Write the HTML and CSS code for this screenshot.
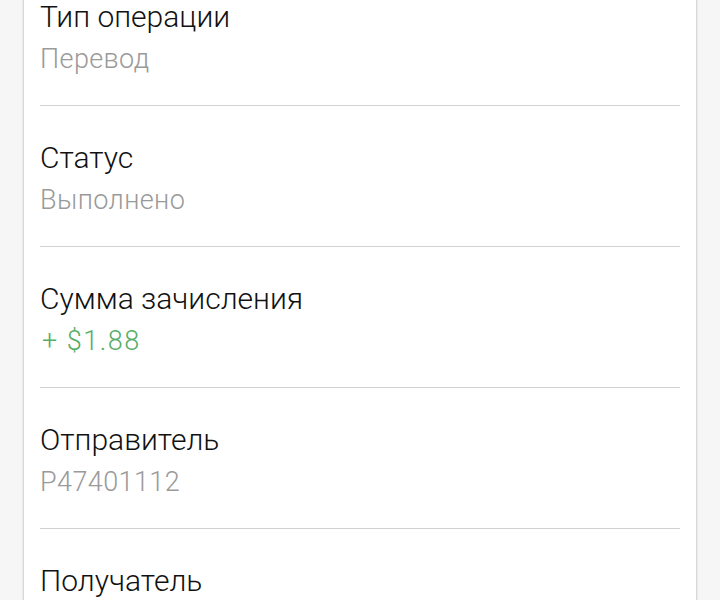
FILE: index.html
```html
<!DOCTYPE html>
<html lang="ru">
<head>
<meta charset="utf-8">
<link rel="stylesheet" href="styles.css">
</head>
<body>
<div class="page">
  <div class="card">
    <div class="row">
      <div class="label">Тип операции</div>
      <div class="value">Перевод</div>
    </div>
    <div class="row">
      <div class="label">Статус</div>
      <div class="value">Выполнено</div>
    </div>
    <div class="row">
      <div class="label">Сумма зачисления</div>
      <div class="value positive">+ $1.88</div>
    </div>
    <div class="row">
      <div class="label">Отправитель</div>
      <div class="value">P47401112</div>
    </div>
    <div class="row">
      <div class="label">Получатель</div>
      <div class="value">P12345678</div>
    </div>
  </div>
</div>
</body>
</html>
```
FILE: styles.css
```css
html, body {
  margin: 0;
  padding: 0;
  background: #f6f6f6;
  overflow: hidden;
  height: 600px;
}
.page {
  padding: 0 24px;
  font-family: Roboto, "Noto Sans", sans-serif;
}
.card {
  background: #ffffff;
  margin-top: -35px;
  padding: 0 16px;
  box-shadow: 0 0 3px rgba(0,0,0,0.22), 0 1px 2px rgba(0,0,0,0.12);
}
.row {
  padding: 31px 0 25px;
  border-bottom: 1px solid #d2d2d2;
}
.label {
  font-size: 30px;
  font-weight: 300;
  line-height: 42px;
  color: #111111;
}
.value {
  font-size: 27px;
  font-weight: 300;
  letter-spacing: 0.4px;
  line-height: 40px;
  margin-top: 1px;
  margin-bottom: 1px;
  color: #9a9a9a;
}
.value.positive {
  color: #56ad66;
  letter-spacing: 1.5px;
  padding-left: 2px;
}
```
